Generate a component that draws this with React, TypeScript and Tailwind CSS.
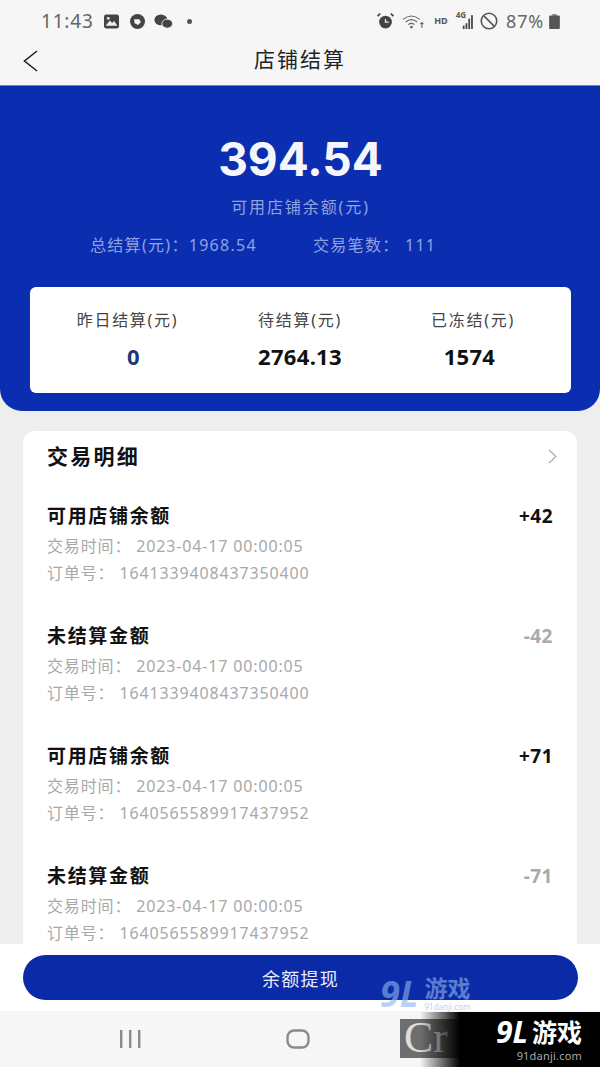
import React from "react";

const font = { fontFamily: '"Noto Sans","Noto Sans CJK SC",sans-serif' };

const rows = [
  { t: "可用店铺余额", v: "+42", o: "1641339408437350400", dark: true },
  { t: "未结算金额", v: "-42", o: "1641339408437350400", dark: false },
  { t: "可用店铺余额", v: "+71", o: "1640565589917437952", dark: true },
  { t: "未结算金额", v: "-71", o: "1640565589917437952", dark: false },
];

function StatusBar() {
  return (
    <div className="h-[41px] shrink-0 flex items-end pb-[10px] pl-[41px] pr-[40px] justify-between text-[#555]">
      <div className="flex items-center">
        <span className="text-[19px] leading-[20px] tracking-[0.8px] text-[#666]">11:43</span>
        <svg className="ml-[9px]" width="17" height="15" viewBox="0 0 15 14">
          <rect x="0.5" y="0.5" width="14" height="13" rx="2" fill="#444" />
          <path d="M2 11 L6 6 L8 8.5 L10 6.5 L13 11Z" fill="#eee" />
          <circle cx="4.5" cy="4" r="1.3" fill="#eee" />
        </svg>
        <svg className="ml-[10px]" width="15" height="15" viewBox="0 0 13 13">
          <circle cx="6.5" cy="6.5" r="6.5" fill="#444" />
          <path d="M3.5 4.5 H8 L9.5 7 L7 9.5 L4 8Z" fill="#f3f3f3" />
        </svg>
        <svg className="ml-[9px]" width="19" height="15" viewBox="0 0 17 14">
          <ellipse cx="6" cy="5.5" rx="6" ry="5" fill="#444" />
          <ellipse cx="12" cy="9" rx="5" ry="4.2" fill="#444" stroke="#f6f6f6" strokeWidth="0.8" />
        </svg>
        <span className="ml-[14px] w-[5px] h-[5px] rounded-full bg-[#555]" />
      </div>
      <div className="flex items-center">
        <svg width="17" height="16" viewBox="0 0 16 15">
          <circle cx="8" cy="8.5" r="6" fill="#444" />
          <path d="M8 5.5 V8.5 H11" stroke="#eee" strokeWidth="1.2" fill="none" />
          <path d="M0.5 3 L3 0.5 M15.5 3 L13 0.5" stroke="#444" strokeWidth="1.6" />
        </svg>
        <svg className="ml-[8px]" width="22" height="15" viewBox="0 0 21 14" fill="none" stroke="#666" strokeWidth="1.1">
          <path d="M1 5 Q9 -1.5 17 5" />
          <path d="M3.5 7.5 Q9 3 14.5 7.5" />
          <path d="M6 10 Q9 7.5 12 10" />
          <circle cx="9" cy="12.3" r="0.8" fill="#666" />
          <path d="M19 13 V8 M17.5 9.5 L19 8 L20.5 9.5" />
        </svg>
        <span className="ml-[10px] text-[9px] leading-[10px] font-bold text-[#555]">HD</span>
        <span className="ml-[8px] text-[8px] leading-[8px] font-bold text-[#555] self-start">4G</span>
        <svg width="12" height="15" viewBox="0 0 9 13" fill="#444" className="-ml-[4px]">
          <rect x="0" y="10" width="1.5" height="3" />
          <rect x="2.4" y="8" width="1.5" height="5" />
          <rect x="4.8" y="4" width="1.5" height="9" />
          <rect x="7.2" y="1" width="1.5" height="12" />
        </svg>
        <svg className="ml-[6px]" width="18" height="18" viewBox="0 0 16 16" fill="none" stroke="#555" strokeWidth="1.4">
          <circle cx="8" cy="8" r="6.9" />
          <path d="M3.2 3.2 L12.8 12.8" />
        </svg>
        <span className="ml-[8px] text-[18px] leading-[20px] tracking-[0.8px] text-[#666]">87%</span>
        <svg className="ml-[5px]" width="11" height="15" viewBox="0 0 10 14">
          <rect x="3" y="0" width="4" height="2" fill="#888" />
          <rect x="0" y="1.5" width="10" height="12.5" rx="1" fill="#555" />
        </svg>
      </div>
    </div>
  );
}

function Header() {
  return (
    <div className="relative h-[44px] shrink-0 flex items-center justify-center">
      <svg className="absolute left-[23px] top-[9px]" width="15" height="22" viewBox="0 0 15 22" fill="none" stroke="#222" strokeWidth="1.6">
        <path d="M14 1 L1.5 11 L14 21" />
      </svg>
      <span className="text-[21px] leading-[28px] tracking-[2px] text-[#222] relative -top-[4px]">店铺结算</span>
    </div>
  );
}

function Stat({ label, value, cls }: { label: string; value: string; cls: string }) {
  return (
    <div className="flex flex-col items-center">
      <span className="text-[16px] leading-[20px] tracking-[1.7px] text-[#444]">{label}</span>
      <span className={`mt-[12px] text-[22px] leading-[28px] font-bold tracking-[0.3px] ${cls}`}>{value}</span>
    </div>
  );
}

function Hero() {
  return (
    <div className="shrink-0 h-[326px] bg-[#0b2eb0] rounded-b-[22px] flex flex-col items-center pt-[43px] pl-[30px] pr-[29px] border-t border-[#6f86c9]">
      <div className="text-[46px] leading-[60px] font-bold text-[#f4f6fc]" style={{ fontFamily: "Inter, sans-serif" }}>394.54</div>
      <div className="mt-[7px] text-[16px] leading-[22px] tracking-[1.9px] text-[#8fa2e0]">可用店铺余额(元)</div>
      <div className="mt-[16px] w-full flex pl-[60px] text-[16px] leading-[22px] text-[#8fa2e0] tracking-[1.3px]">
        <span className="w-[223px]">总结算(元)：1968.54</span>
        <span>交易笔数： 111</span>
      </div>
      <div className="mt-[31px] w-full h-[106px] bg-white rounded-[6px] grid grid-cols-[195px_150px_1fr] pt-[23px]">
        <Stat label="昨日结算(元)" value="0" cls="text-[#1c3a7a] ml-[12px]" />
        <Stat label="待结算(元)" value="2764.13" cls="text-[#111]" />
        <Stat label="已冻结(元)" value="1574" cls="text-[#111] mr-[7px]" />
      </div>
    </div>
  );
}

function Row({ t, v, o, dark }: { t: string; v: string; o: string; dark: boolean }) {
  return (
    <div className="h-[120px] shrink-0">
      <div className="flex justify-between items-center h-[28px]">
        <span className="text-[19px] leading-[28px] font-bold tracking-[1.67px] text-[#111]">{t}</span>
        <span className={`text-[19px] leading-[28px] font-bold tracking-[0.5px] ${dark ? "text-[#111]" : "text-[#aaa]"}`}>{v}</span>
      </div>
      <div className="mt-[3px] text-[16px] leading-[27px] text-[#a8a8a8] tracking-[0.85px]">交易时间： 2023-04-17 00:00:05</div>
      <div className="text-[16px] leading-[27px] text-[#a8a8a8] tracking-[0.85px]">订单号： {o}</div>
    </div>
  );
}

function List() {
  return (
    <div className="flex-1 min-h-0 overflow-hidden px-[23px] pt-[20px]">
      <div className="bg-white rounded-t-[12px] h-full px-[24px] pt-[8px] overflow-hidden">
        <div className="flex items-center justify-between h-[34px]">
          <span className="text-[21px] leading-[28px] font-bold tracking-[2.25px] text-[#111]">交易明细</span>
          <svg className="-mr-[4px]" width="9" height="15" viewBox="0 0 9 15" fill="none" stroke="#aaa" strokeWidth="1.2">
            <path d="M1 1 L8 7.5 L1 14" />
          </svg>
        </div>
        <div className="mt-[29px]">
          {rows.map((r, i) => (
            <Row key={i} {...r} />
          ))}
        </div>
      </div>
    </div>
  );
}

function Footer() {
  return (
    <div className="relative shrink-0">
      <div className="h-[67px] bg-white pl-[23px] pr-[22px] pt-[11px]">
        <div className="h-[45px] pt-[3px] rounded-full bg-[#0b2aa8] flex items-center justify-center text-[18px] tracking-[1.25px] text-[#e8ecf8]">余额提现</div>
      </div>
      <div className="h-[56px] bg-[#f6f6f6] flex items-center">
        <svg className="ml-[119px]" width="22" height="18" viewBox="0 0 22 18" fill="#8a8a8a">
          <rect x="1" y="0" width="2.4" height="18" />
          <rect x="10" y="0" width="2.4" height="18" />
          <rect x="19" y="0" width="2.4" height="18" />
        </svg>
        <svg className="ml-[145px]" width="24" height="20" viewBox="0 0 24 20" fill="none" stroke="#8a8a8a" strokeWidth="2.4">
          <rect x="1.5" y="1.5" width="21" height="17" rx="6.5" />
        </svg>
      </div>
      {/* watermark over the button */}
      <div className="absolute left-[380px] top-[31px] flex items-start text-[#8fb4ee] opacity-60">
        <span className="text-[36px] leading-[38px] font-bold italic">9L</span>
        <span className="ml-[6px] flex flex-col items-start">
          <span className="text-[23px] leading-[27px] font-bold">游戏</span>
          <span className="text-[8px] leading-[10px]">91danji.com</span>
        </span>
      </div>
      {/* watermark block in the corner */}
      <div className="absolute left-[400px] top-[75px] h-[39px] w-[70px] bg-[#6e6e6e]">
        <span className="block ml-[4px] text-[44px] leading-[38px] text-[#ddd]" style={{ fontFamily: '"Liberation Serif",serif' }}>Cr</span>
      </div>
      <div className="absolute left-[420px] right-0 bottom-0 h-[55px] flex">
        <div className="w-[40px] bg-gradient-to-r from-transparent to-black" />
        <div className="flex-1 bg-black" />
      </div>
      <div className="absolute right-[18px] top-[73px] flex flex-col items-end text-white">
        <div className="flex items-center">
          <span className="text-[30px] leading-[30px] font-bold italic">9L</span>
          <span className="ml-[4px] text-[25px] leading-[30px] font-bold">游戏</span>
        </div>
        <span className="mt-[2px] text-[11px] leading-[14px] tracking-[0.2px] text-[#aaa]">91danji.com</span>
      </div>
    </div>
  );
}

export default function App() {
  return (
    <div className="w-[600px] h-[1067px] flex flex-col overflow-hidden bg-[#eeeeee]" style={font}>
      <div className="bg-[#f6f6f6] shrink-0">
        <StatusBar />
        <Header />
      </div>
      <Hero />
      <List />
      <Footer />
    </div>
  );
}
